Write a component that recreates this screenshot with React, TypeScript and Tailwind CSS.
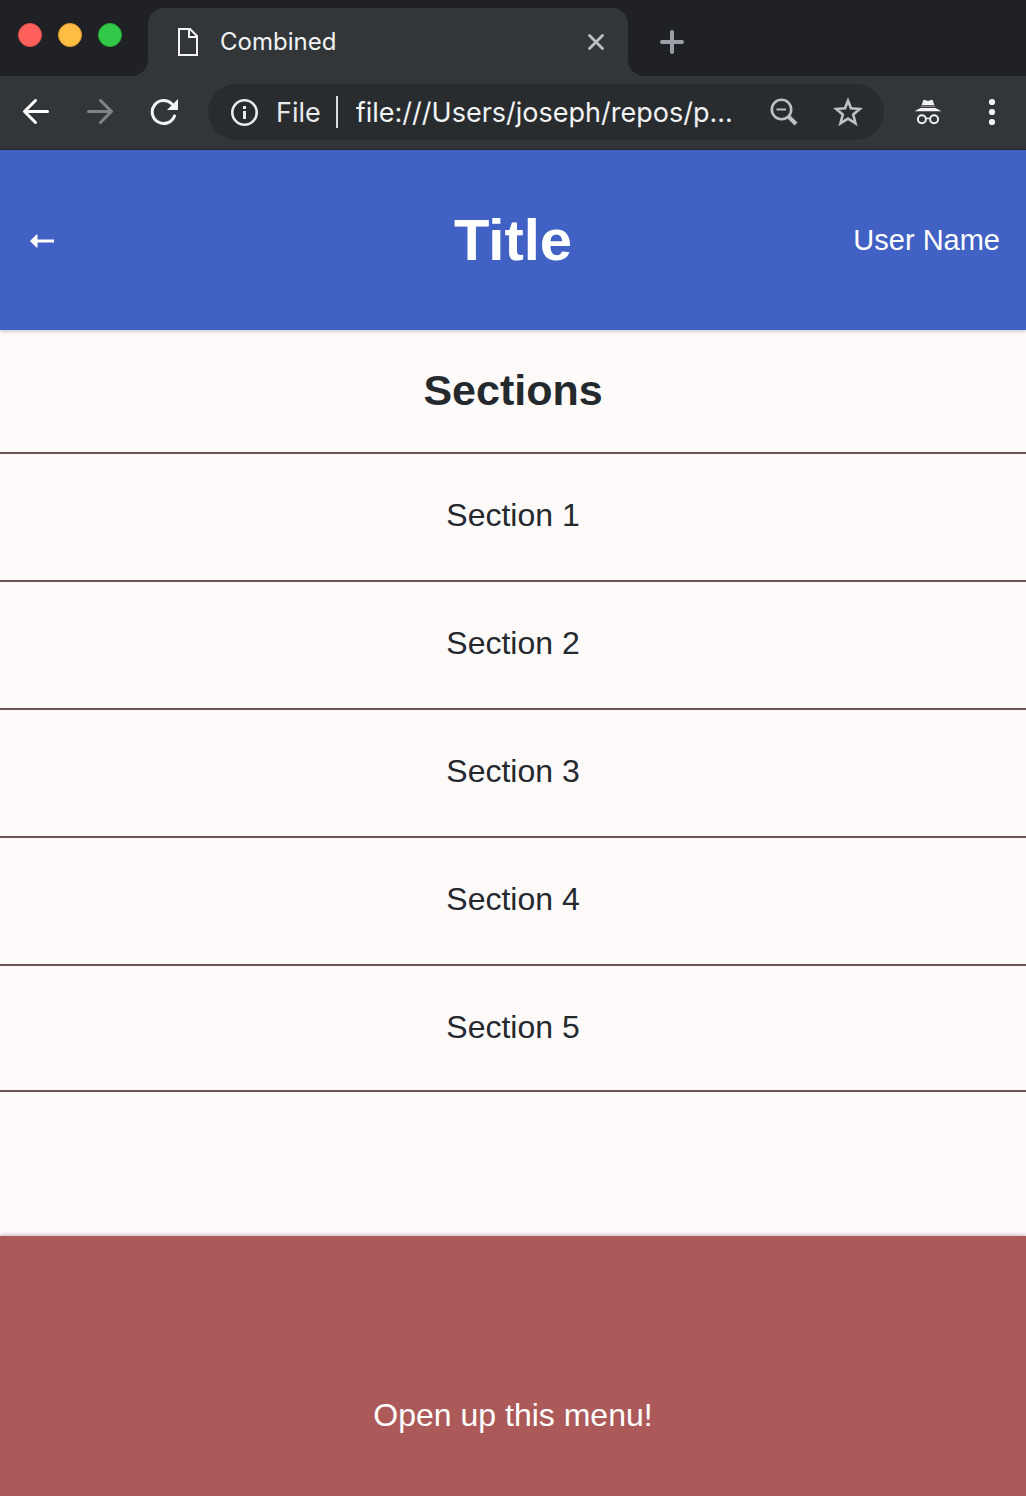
const sections = ['Section 1', 'Section 2', 'Section 3', 'Section 4', 'Section 5'];

const iconButton = 'flex h-14 w-16 shrink-0 items-center justify-center';

function TabStrip() {
  return (
    <div className="flex h-[76px] bg-[#323639]">
      <div className="flex w-[148px] shrink-0 gap-4 rounded-br-2xl bg-[#202124] pt-[23px] pl-[18px]">
        <button aria-label="Close window" className="size-6 rounded-full border border-[#e2504c] bg-[#ff605c]" />
        <button aria-label="Minimize window" className="size-6 rounded-full border border-[#e1a032] bg-[#ffbd44]" />
        <button aria-label="Zoom window" className="size-6 rounded-full border border-[#26ab35] bg-[#33c948]" />
      </div>
      <div className="w-[480px] bg-[#202124] pt-2">
        <div className="flex h-full items-center rounded-t-2xl bg-[#323639] pr-5 pl-7">
          <svg width="24" height="28" viewBox="0 0 24 28" fill="none" stroke="#f1f3f4" strokeWidth="2">
            <path d="M3 1H14L21 8V27H3Z" />
            <path d="M13 1V9H21" />
          </svg>
          <span className="ml-5 flex-1 text-2xl text-[#f1f3f4]">Combined</span>
          <button aria-label="Close tab" className="flex size-6 items-center justify-center">
            <svg width="18" height="18" viewBox="0 0 18 18" stroke="#bdc1c6" strokeWidth="2.8" strokeLinecap="round">
              <path d="M2.500 2.500L15.500 15.500M15.500 2.500L2.500 15.500" />
            </svg>
          </button>
        </div>
      </div>
      <div className="flex flex-1 items-center rounded-bl-2xl bg-[#202124] pt-2 pl-8">
        <button aria-label="New tab">
          <svg width="24" height="24" viewBox="0 0 24 24" stroke="#9aa0a6" strokeWidth="4" strokeLinecap="round">
            <path d="M12 2V22M2 12H22" />
          </svg>
        </button>
      </div>
    </div>
  );
}

function Toolbar() {
  return (
    <div className="flex items-center border-b border-[#25282b] bg-[#323639] pt-2 pr-0.5 pb-[9px] pl-1">
      <button aria-label="Back" className={iconButton}>
        <svg width="28" height="28" viewBox="0 0 28 28" fill="none" stroke="#fff" strokeWidth="3" strokeLinecap="round" strokeLinejoin="round">
          <path d="M25.500 13.500H3M13.500 2.500L2.500 13.500L13.500 24.500" />
        </svg>
      </button>
      <button aria-label="Forward" className={iconButton}>
        <svg width="28" height="28" viewBox="0 0 28 28" fill="none" stroke="#818487" strokeWidth="3" strokeLinecap="round" strokeLinejoin="round">
          <path d="M2.500 13.500H25M14.500 2.500L25.500 13.500L14.500 24.500" />
        </svg>
      </button>
      <button aria-label="Reload" className={iconButton}>
        <svg width="28" height="28" viewBox="0 0 28 28" fill="none">
          <path d="M24.500 18A11.500 11.500 0 1 1 22 6" stroke="#f1f3f4" strokeWidth="3" strokeLinecap="round" />
          <path d="M28 1V12H17Z" fill="#f1f3f4" />
        </svg>
      </button>
      <div className="mx-3 flex h-14 min-w-0 flex-1 items-center rounded-full bg-[#292c2f] pr-1 pl-[22px]">
        <svg className="shrink-0" width="28" height="28" viewBox="0 0 28 28" fill="none">
          <circle cx="14.500" cy="14.500" r="12.200" stroke="#e8eaed" strokeWidth="2.600" />
          <path d="M14.500 13V21M14.500 8V11" stroke="#e8eaed" strokeWidth="3" />
        </svg>
        <label htmlFor="address" className="ml-[18px] pt-0.5 text-[27px] text-[#e8eaed]">File</label>
        <span className="mr-[18px] ml-[15px] h-8 w-0.5 shrink-0 bg-[#dcdcdc]" />
        <input
          id="address"
          type="text"
          defaultValue="file:///Users/joseph/repos/p..."
          className="min-w-0 flex-1 bg-transparent pt-0.5 text-[27px] text-[#f1f3f4] outline-none"
        />
        <button aria-label="Zoom level" className={iconButton}>
          <svg width="28" height="28" viewBox="0 0 28 28" fill="none" stroke="#bdc1c6">
            <circle cx="11.500" cy="11.500" r="9.700" strokeWidth="2.600" />
            <path d="M6.500 11.500H16" strokeWidth="2" />
            <path d="M18.500 18.500L26 26" strokeWidth="4" />
          </svg>
        </button>
        <button aria-label="Bookmark this page" className={iconButton}>
          <svg width="30" height="30" viewBox="0 0 30 30" fill="none" stroke="#bdc1c6" strokeWidth="2.600">
            <path d="M15 3.800L18 11.300L26.800 12L20.200 17.500L22.500 26.300L15 21.600L7.500 26.300L9.800 17.500L3.200 12L12 11.300Z" />
          </svg>
        </button>
      </div>
      <button aria-label="Incognito" className={iconButton}>
        <svg width="28" height="28" viewBox="0 0 28 28" fill="none">
          <path d="M9.200 2.500Q9.500 1.500 10.800 2L14 3L17.200 2Q18.500 1.500 18.800 2.500L20.300 7H7.700Z" fill="#f1f3f4" />
          <path d="M7 8.200H21" stroke="#aaadaf" strokeWidth="1" />
          <path d="M6.500 10H21.500L27.500 13.300H0.500Z" fill="#f1f3f4" />
          <circle cx="7.900" cy="21.300" r="4" stroke="#f1f3f4" strokeWidth="1.900" />
          <circle cx="20.100" cy="21.300" r="4" stroke="#f1f3f4" strokeWidth="1.900" />
          <path d="M11.900 20.900Q14 19.700 16.100 20.900" stroke="#f1f3f4" strokeWidth="1.600" />
        </svg>
      </button>
      <button aria-label="Browser menu" className={iconButton}>
        <svg width="28" height="28" viewBox="0 0 28 28" fill="#f1f3f4">
          <circle cx="14" cy="4" r="3.100" />
          <circle cx="14" cy="14" r="3.100" />
          <circle cx="14" cy="24" r="3.100" />
        </svg>
      </button>
    </div>
  );
}

export default function App() {
  return (
    <div className="flex min-h-screen flex-col bg-[#fffafa] font-['Liberation_Sans',Arial,sans-serif] text-[#24292e]">
      <div className="font-[Inter,sans-serif]">
        <TabStrip />
        <Toolbar />
      </div>
      <header className="grid h-[180px] grid-cols-[1fr_auto_1fr] items-center bg-[#4161c4] px-[26px] text-white shadow-[0_1px_4px_rgba(0,0,0,0.25)]">
        <a href="#back" aria-label="Go back" className="justify-self-start pt-0.5 pl-1">
          <svg width="24" height="14" viewBox="0 0 24 14" fill="#fff">
            <path d="M0 7L6.500 0.500H7.500V5.500H24V8.500H7.500V13.500H6.500Z" />
          </svg>
        </a>
        <h1 className="pb-0.5 text-[58px] font-bold">Title</h1>
        <a href="#user" className="justify-self-end pt-0.5 text-[29px]">User Name</a>
      </header>
      <main className="flex-1">
        <h2 className="pt-7 pb-[30px] text-center text-[43px] leading-[64px] font-bold">Sections</h2>
        <ul className="border-b-2 border-[#6f5256]">
          {sections.map((name) => (
            <li key={name} className="border-t-2 border-[#6f5256] last:-mb-0.5">
              <a href="#section" className="block pt-[37px] pb-[41px] text-center text-[32px] leading-[48px]">{name}</a>
            </li>
          ))}
        </ul>
      </main>
      <button className="h-[260px] w-full bg-[#ac5959] pt-[98px] text-[32px] text-white shadow-[0_-1px_4px_rgba(0,0,0,0.25)]">
        Open up this menu!
      </button>
    </div>
  );
}
